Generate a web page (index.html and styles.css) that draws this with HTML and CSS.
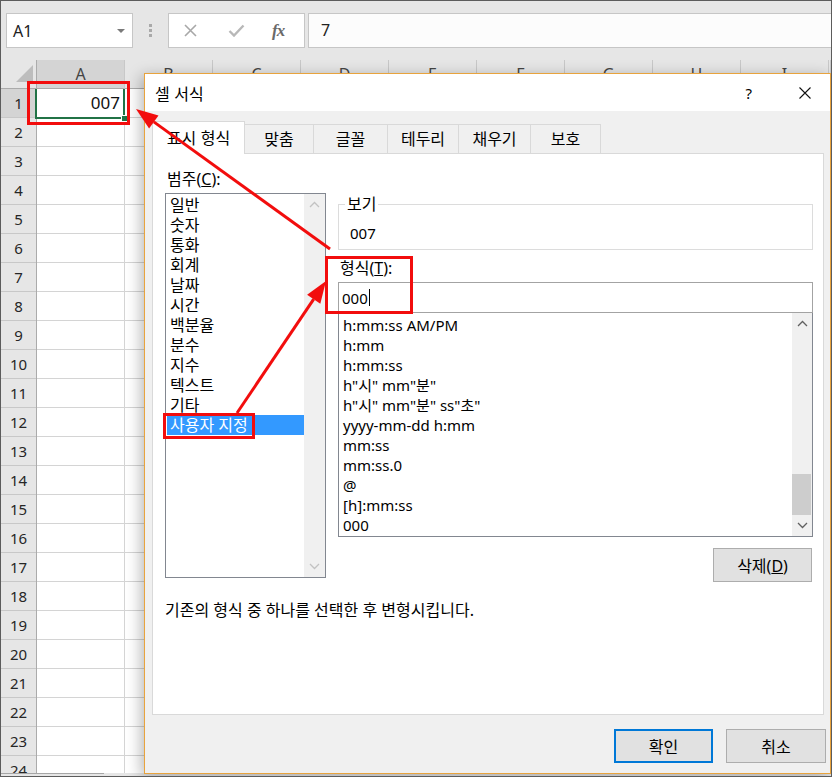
FILE: index.html
```html
<!DOCTYPE html>
<html lang="ko">
<head>
<meta charset="utf-8">
<title>셀 서식</title>
<link rel="stylesheet" href="styles.css">
</head>
<body>
<div class="app">
  <div class="formula-bar">
    <div class="name-box"><span>A1</span><span class="nb-arrow"></span></div>
    <div class="grip"><i></i><i></i><i></i></div>
    <div class="fn-buttons">
      <svg class="ic-cancel" width="15" height="13" viewBox="0 0 15 13"><path d="M2 1 L13 12 M13 1 L2 12" stroke="#a8a8a8" stroke-width="1.6" fill="none"/></svg>
      <svg class="ic-check" width="17" height="13" viewBox="0 0 17 13"><path d="M1.5 7 L6 11.5 L15.5 1.5" stroke="#b8b8b8" stroke-width="2.4" fill="none"/></svg>
      <span class="fx">fx</span>
    </div>
    <div class="formula-input">7</div>
  </div>

  <div class="sheet">
    <div class="col-headers">
      <div class="corner"><svg width="35" height="28" viewBox="0 0 35 28"><path d="M32 5 L32 22 L15 22 Z" fill="#bdbdbd"/></svg></div>
      <div class="col-h sel">A</div>
      <div class="col-h">B</div>
      <div class="col-h">C</div>
      <div class="col-h">D</div>
      <div class="col-h">E</div>
      <div class="col-h">F</div>
      <div class="col-h">G</div>
      <div class="col-h">H</div>
      <div class="col-h">I</div>
      <div class="col-h"></div>
    </div>
    <div class="sheet-body">
      <div class="row-headers">
        <div class="row-h sel">1</div><div class="row-h">2</div><div class="row-h">3</div><div class="row-h">4</div>
        <div class="row-h">5</div><div class="row-h">6</div><div class="row-h">7</div><div class="row-h">8</div>
        <div class="row-h">9</div><div class="row-h">10</div><div class="row-h">11</div><div class="row-h">12</div>
        <div class="row-h">13</div><div class="row-h">14</div><div class="row-h">15</div><div class="row-h">16</div>
        <div class="row-h">17</div><div class="row-h">18</div><div class="row-h">19</div><div class="row-h">20</div>
        <div class="row-h">21</div><div class="row-h">22</div><div class="row-h">23</div><div class="row-h">24</div>
      </div>
      <div class="cells">
        <div class="cell-a1">007<span class="fill-handle"></span></div>
      </div>
    </div>
  </div>
  <div class="status-strip"><div class="strip-line"></div></div>

  <div class="dialog">
    <div class="dlg-title">
      <span class="dlg-name">셀 서식</span>
      <span class="dlg-help">?</span>
      <svg class="dlg-close" width="12" height="12" viewBox="0 0 12 12"><path d="M0.5 0.5 L11.5 11.5 M11.5 0.5 L0.5 11.5" stroke="#111" stroke-width="1.1" fill="none"/></svg>
    </div>
    <div class="dlg-body">
      <div class="tabs">
        <div class="tab active">표시 형식</div>
        <div class="tab">맞춤</div>
        <div class="tab">글꼴</div>
        <div class="tab">테두리</div>
        <div class="tab">채우기</div>
        <div class="tab">보호</div>
      </div>
      <div class="panel">
        <div class="left-col">
          <div class="label">범주(<u>C</u>):</div>
          <div class="listbox cat-list">
            <ul class="items">
              <li>일반</li><li>숫자</li><li>통화</li><li>회계</li><li>날짜</li><li>시간</li>
              <li>백분율</li><li>분수</li><li>지수</li><li>텍스트</li><li>기타</li>
              <li class="selected">사용자 지정</li>
            </ul>
            <div class="vscroll">
              <svg class="chev" width="11" height="7" viewBox="0 0 11 7"><path d="M1 6 L5.5 1.5 L10 6" stroke="#c2c2c2" stroke-width="1.3" fill="none"/></svg>
              <div class="track"></div>
              <svg class="chev" width="11" height="7" viewBox="0 0 11 7"><path d="M1 1 L5.5 5.5 L10 1" stroke="#c2c2c2" stroke-width="1.3" fill="none"/></svg>
            </div>
          </div>
        </div>
        <div class="right-col">
          <fieldset class="sample">
            <legend>보기</legend>
            <div class="sample-value">007</div>
          </fieldset>
          <div class="label fmt-label">형식(<u>T</u>):</div>
          <div class="fmt-input"><span>000</span><span class="caret"></span></div>
          <div class="listbox fmt-list">
            <ul class="items">
              <li>h:mm:ss AM/PM</li>
              <li>h:mm</li>
              <li>h:mm:ss</li>
              <li>h"시" mm"분"</li>
              <li>h"시" mm"분" ss"초"</li>
              <li>yyyy-mm-dd h:mm</li>
              <li>mm:ss</li>
              <li>mm:ss.0</li>
              <li>@</li>
              <li>[h]:mm:ss</li>
              <li>000</li>
            </ul>
            <div class="vscroll">
              <svg class="chev" width="11" height="7" viewBox="0 0 11 7"><path d="M1 6 L5.5 1.5 L10 6" stroke="#606060" stroke-width="1.3" fill="none"/></svg>
              <div class="track"><div class="thumb"></div></div>
              <svg class="chev" width="11" height="7" viewBox="0 0 11 7"><path d="M1 1 L5.5 5.5 L10 1" stroke="#606060" stroke-width="1.3" fill="none"/></svg>
            </div>
          </div>
          <div class="del-row"><button class="btn">삭제(<u>D</u>)</button></div>
        </div>
        <p class="desc">기존의 형식 중 하나를 선택한 후 변형시킵니다.</p>
      </div>
      <div class="dlg-buttons">
        <button class="btn default">확인</button>
        <button class="btn">취소</button>
      </div>
    </div>
  </div>

  <svg class="annotations" width="832" height="777" viewBox="0 0 832 777">
    <g fill="none" stroke="#f20d0d" stroke-width="3">
      <rect x="28.5" y="82.5" width="100" height="41"/>
      <rect x="164.5" y="414.5" width="89" height="23"/>
      <rect x="326.5" y="257.5" width="85" height="55"/>
      <line x1="330" y1="249" x2="153.8" y2="121.9"/>
      <line x1="237" y1="413" x2="313.7" y2="299.2"/>
    </g>
    <g fill="#f20d0d">
      <polygon points="136,109 158.5,115.4 149.1,128.4"/>
      <polygon points="326,281 320.3,303.7 307.1,294.7"/>
    </g>
  </svg>
</div>
</body>
</html>
```

FILE: styles.css
```css
* { box-sizing: border-box; }
html, body { margin: 0; padding: 0; }
body {
  background: #fff;
  font-family: "Noto Sans", "Noto Sans CJK KR", sans-serif;
  color: #000;
}

.app {
  position: relative;
  width: 832px;
  height: 777px;
  border: 1px solid #5c5c5c;
  overflow: hidden;
  background: #fff;
  display: flex;
  flex-direction: column;
}

/* ---------- formula bar ---------- */
.formula-bar {
  flex: none;
  height: 59px;
  background: #e6e6e6;
  display: flex;
  align-items: flex-start;
  padding: 12px 0 0 5px;
}
.name-box {
  width: 127px;
  height: 35px;
  background: #fff;
  border: 1px solid #c6c6c6;
  display: flex;
  align-items: center;
  justify-content: space-between;
  padding: 0 7px 0 6px;
  font-size: 16px;
  color: #222;
}
.nb-arrow {
  width: 0;
  height: 0;
  border-left: 4px solid transparent;
  border-right: 4px solid transparent;
  border-top: 4px solid #7a7a7a;
}
.grip {
  margin: 11px 0 0 16px;
  display: flex;
  flex-direction: column;
  gap: 2px;
}
.grip i {
  display: block;
  width: 3px;
  height: 3px;
  background: #a9a9a9;
}
.fn-buttons {
  margin-left: 16px;
  width: 137px;
  height: 35px;
  background: #fff;
  border: 1px solid #c6c6c6;
  display: flex;
  align-items: center;
  padding-left: 14px;
}
.ic-check { margin-left: 30px; }
.fx {
  margin-left: 27px;
  font-family: "Liberation Serif", serif;
  font-style: italic;
  font-weight: bold;
  font-size: 17px;
  color: #6a6a6a;
  letter-spacing: -1px;
}
.formula-input {
  flex: 1;
  margin-left: 3px;
  height: 35px;
  background: #fcfcfc;
  border: 1px solid #c6c6c6;
  border-right: none;
  padding-left: 12px;
  font-size: 16px;
  line-height: 33px;
  color: #222;
}

/* ---------- sheet ---------- */
.sheet {
  flex: 1;
  display: flex;
  flex-direction: column;
  overflow: hidden;
}
.col-headers {
  flex: none;
  height: 29px;
  display: grid;
  grid-template-columns: 36px repeat(9, 88px) 1fr;
  background: #e6e6e6;
}
.corner {
  border-right: 1px solid #ababab;
  border-bottom: 1px solid #ababab;
}
.corner svg { display: block; }
.col-h {
  border-right: 1px solid #c8c8c8;
  border-bottom: 1px solid #ababab;
  text-align: center;
  font-size: 16px;
  line-height: 28px;
  color: #444;
}
.col-h.sel { background: #d4d4d4; }
.sheet-body {
  flex: 1;
  display: flex;
  overflow: hidden;
}
.row-headers {
  width: 36px;
  flex: none;
  background: #e6e6e6;
  border-right: 1px solid #ababab;
}
.row-h {
  height: 29px;
  border-bottom: 1px solid #c8c8c8;
  text-align: center;
  font-size: 15px;
  line-height: 28px;
  color: #262626;
}
.row-h.sel { background: #d4d4d4; }
.cells {
  flex: 1;
  background:
    repeating-linear-gradient(to right, transparent 0 87px, #d4d4d4 87px 88px),
    repeating-linear-gradient(to bottom, transparent 0 28px, #d4d4d4 28px 29px);
}
.cell-a1 {
  position: relative;
  width: 90px;
  height: 32px;
  margin: -2px 0 0 -2px;
  border: 2px solid #217346;
  background: #fff;
  text-align: right;
  padding-right: 3px;
  font-size: 17px;
  line-height: 27px;
  color: #111;
}
.fill-handle {
  position: absolute;
  right: -5px;
  bottom: -5px;
  width: 7px;
  height: 7px;
  background: #217346;
  border: 1px solid #fff;
}
.status-strip {
  flex: none;
  height: 3px;
  background: #e6e6e6;
}
.strip-line {
  width: 103px;
  height: 1px;
  background: #a6a6a6;
}

/* ---------- dialog ---------- */
.dialog {
  position: absolute;
  left: 143px;
  top: 72px;
  width: 687px;
  height: 701px;
  border: 1px solid #e8a33d;
  background: #f0f0f0;
  box-shadow: -3px 3px 14px rgba(0, 0, 0, 0.28);
  display: flex;
  flex-direction: column;
  font-family: "Noto Sans", "Noto Sans CJK KR", sans-serif;
  font-size: 16px;
}
.dlg-title {
  flex: none;
  height: 37px;
  background: #fff;
  display: flex;
  align-items: center;
  padding: 0 19px 0 10px;
  font-family: "Noto Sans CJK KR", sans-serif;
}
.dlg-name { font-size: 16px; }
.dlg-help {
  margin-left: auto;
  font-family: "Noto Sans", sans-serif;
  font-size: 15px;
  margin-right: 47px;
}
.dlg-body {
  flex: 1;
  padding: 10px 6px 0 7px;
  display: flex;
  flex-direction: column;
}
.tabs {
  flex: none;
  height: 32px;
  display: flex;
  align-items: flex-end;
}
.tab {
  height: 29px;
  border: 1px solid #d9d9d9;
  border-bottom: none;
  margin-right: -1px;
  text-align: center;
  line-height: 27px;
  font-family: "Noto Sans CJK KR", sans-serif;
  font-size: 16px;
}
.tab:nth-child(1) { width: 93px; }
.tab:nth-child(2) { width: 70px; }
.tab:nth-child(3) { width: 75px; }
.tab:nth-child(4) { width: 72px; }
.tab:nth-child(5) { width: 73px; }
.tab:nth-child(6) { width: 71px; }
.tab.active {
  height: 33px;
  margin-bottom: -1px;
  background: #fff;
  position: relative;
  z-index: 1;
  line-height: 31px;
}
.panel {
  flex: none;
  width: 672px;
  height: 562px;
  background: #fff;
  border: 1px solid #d9d9d9;
  padding: 15px 9px 0 12px;
  display: grid;
  grid-template-columns: 161px 475px;
  column-gap: 12px;
  align-content: start;
}
.label {
  height: 20px;
  line-height: 20px;
  padding-left: 2px;
}
.listbox {
  display: flex;
  border: 1px solid #828790;
  background: #fff;
}
.cat-list {
  margin-top: 4px;
  height: 385px;
}
.cat-list .items { padding-top: 1px; }
.items {
  list-style: none;
  margin: 0;
  padding: 0 0 0 1px;
  flex: 1;
}
.items li {
  height: 20px;
  line-height: 20px;
  padding-left: 3px;
  white-space: nowrap;
}
.items li.selected {
  background: #3399ff;
  color: #fff;
}
.vscroll {
  width: 21px;
  flex: none;
  background: #f0f0f0;
  display: flex;
  flex-direction: column;
  align-items: center;
}
.chev {
  flex: none;
  margin: 7px 0;
}
.track {
  flex: 1;
  width: 100%;
  display: flex;
  flex-direction: column;
  justify-content: flex-end;
  padding: 0 1px 0 0;
}
.thumb {
  height: 41px;
  background: #cdcdcd;
}
.right-col {
  display: flex;
  flex-direction: column;
}
.sample {
  margin: 25px 0 0;
  padding: 9px 0 6px 11px;
  border: 1px solid #dcdcdc;
  min-width: 0;
}
.sample legend {
  margin-left: -5px;
  padding: 0 2px;
  line-height: 20px;
}
.sample-value {
  height: 20px;
  line-height: 20px;
  font-size: 15px;
}
.fmt-label { margin-top: 8px; }
.fmt-input {
  margin-top: 4px;
  height: 31px;
  border: 1px solid #a3a3a3;
  display: flex;
  align-items: center;
  padding-left: 3px;
  position: relative;
  z-index: 1;
  font-size: 15px;
}
.caret {
  width: 1px;
  height: 17px;
  background: #000;
  margin-left: 1px;
}
.fmt-list {
  margin-top: -1px;
  height: 225px;
  font-size: 15px;
}
.fmt-list .items { padding-top: 2px; }
.fmt-list .vscroll { width: 20px; }
.del-row {
  margin-top: 11px;
  display: flex;
  justify-content: flex-end;
  padding-right: 1px;
}
.btn {
  width: 99px;
  height: 34px;
  background: #e1e1e1;
  border: 1px solid #adadad;
  font-family: "Noto Sans", "Noto Sans CJK KR", sans-serif;
  font-size: 16px;
  color: #000;
  padding: 0;
}
.btn.default { border: 2px solid #0078d7; }
.desc {
  grid-column: 1 / span 2;
  margin: 18px 0 0;
  line-height: 20px;
}
.dlg-buttons {
  margin: 14px -2px 0 0;
  display: flex;
  justify-content: flex-end;
  gap: 13px;
}
.dlg-buttons .btn { height: 34px; }
.dlg-buttons .btn:last-child { width: 100px; }

/* ---------- annotations ---------- */
.annotations {
  position: absolute;
  left: -1px;
  top: -1px;
  pointer-events: none;
  z-index: 5;
}
```
